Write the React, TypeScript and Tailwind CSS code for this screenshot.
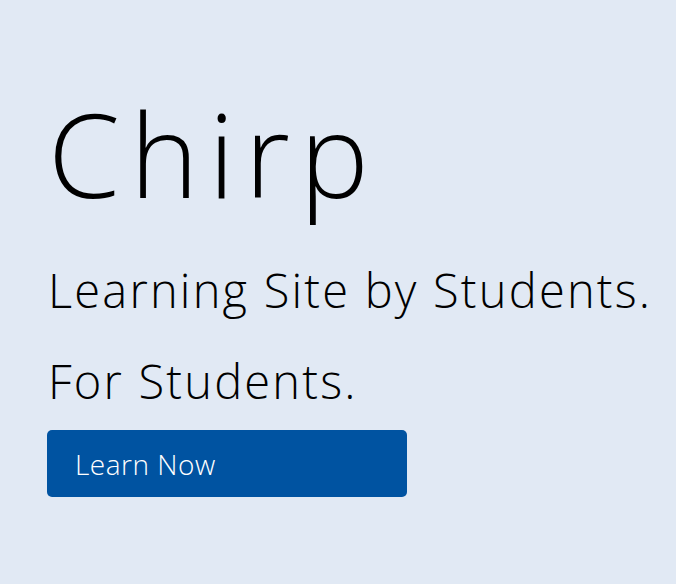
import React from 'react';

export default function App() {
  return (
    <div
      className="min-h-screen w-full bg-[#e1e9f4] pl-[48px] pt-[95px] text-black"
      style={{ fontFamily: '"Open Sans", "Liberation Sans", sans-serif' }}
    >
      <h1 className="whitespace-nowrap text-[116px] leading-[116px] font-light tracking-[10px]">Chirp</h1>
      <p className="mt-[56px] whitespace-nowrap text-[47px] leading-[47px] font-light tracking-[2.2px]">
        Learning Site by Students.
      </p>
      <p className="mt-[44px] whitespace-nowrap text-[47px] leading-[47px] font-light tracking-[2.2px]">For Students.</p>
      <button className="-ml-px mt-[25px] flex h-[67px] w-[360px] items-center rounded-[5px] bg-[#0053a1] pl-[28px] text-[28px] font-light tracking-[0.5px] text-white">
        Learn Now
      </button>
    </div>
  );
}
